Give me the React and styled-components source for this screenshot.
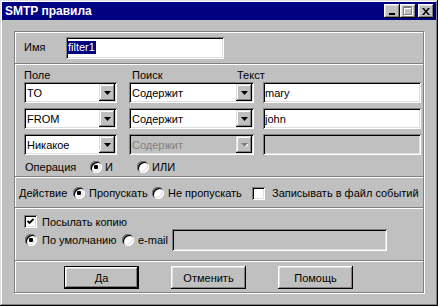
import React from 'react';
import styled, { createGlobalStyle } from 'styled-components';

const Global = createGlobalStyle`
  html, body { margin: 0; padding: 0; background: #c0c0c0; }
  body { font-family: "Liberation Sans", Arial, sans-serif; font-size: 11px; color: #000; }
  * { box-sizing: border-box; }
`;

const Window = styled.div`
  width: 438px;
  height: 306px;
  padding: 2px;
  background: #c0c0c0;
  box-shadow: inset -1px -1px #000, inset 1px 1px #dfdfdf, inset -2px -2px #808080, inset 2px 2px #fff;
  display: flex;
  flex-direction: column;
`;

const TitleBar = styled.div`
  height: 18px;
  background: #000080;
  color: #fff;
  font-weight: bold;
  font-size: 12px;
  padding-left: 3px;
  padding-right: 2px;
  display: flex;
  align-items: center;
`;

const Title = styled.span`
  flex: 1;
  white-space: nowrap;
`;

const CapBtn = styled.div`
  width: 16px;
  height: 14px;
  margin-left: ${p => p.$gap || 0}px;
  background: #c0c0c0;
  box-shadow: inset -1px -1px #000, inset 1px 1px #fff, inset -2px -2px #808080, inset 2px 2px #dfdfdf;
  display: flex;
  align-items: center;
  justify-content: center;
  svg { display: block; }
`;

const Body = styled.div`
  flex: 1;
  padding: 11px 12px 11px 12px;
  display: flex;
`;

const Group = styled.div`
  flex: 1;
  border: 1px solid #808080;
  box-shadow: inset 1px 1px #fff, 1px 1px #fff;
  display: flex;
  flex-direction: column;
`;

const Section = styled.div`
  height: ${p => p.$h}px;
  border-top: ${p => (p.$first ? 'none' : '1px solid #808080')};
  box-shadow: ${p => (p.$first ? 'none' : 'inset 0 1px #fff')};
  padding: ${p => p.$pad || '0'};
  display: flex;
  flex-direction: column;
`;

const Row = styled.div`
  display: flex;
  align-items: center;
  height: ${p => p.$h || 'auto'}${p => (p.$h ? 'px' : '')};
  margin-top: ${p => p.$mt || 0}px;
`;

const Label = styled.span`
  display: inline-block;
  width: ${p => (p.$w ? `${p.$w}px` : 'auto')};
  margin-left: ${p => p.$ml || 0}px;
  white-space: nowrap;
  line-height: 13px;
`;

const sunken = `
  box-shadow: inset 1px 1px #808080, inset -1px -1px #fff, inset 2px 2px #000, inset -2px -2px #dfdfdf;
`;

const Field = styled.div`
  width: ${p => p.$w}px;
  height: ${p => p.$h || 21}px;
  background: ${p => (p.$disabled ? '#c0c0c0' : '#fff')};
  ${sunken}
  padding: 0 2px;
  display: flex;
  align-items: center;
  white-space: nowrap;
  overflow: hidden;
`;

const Selected = styled.span`
  background: #000080;
  color: #fff;
  line-height: 13px;
  padding: 0 1px 0 0;
`;

const FieldRows = styled.div`
  display: grid;
  grid-template-columns: 105px 134px 158px;
  grid-auto-rows: 21px;
  row-gap: 5px;
`;

const Combo = styled.div`
  width: ${p => p.$w}px;
  height: 21px;
  background: ${p => (p.$disabled ? '#c0c0c0' : '#fff')};
  ${sunken}
  padding: 2px 2px 2px 3px;
  display: flex;
  align-items: center;
`;

const ComboText = styled.span`
  flex: 1;
  color: ${p => (p.$disabled ? '#808080' : '#000')};
  white-space: nowrap;
  overflow: hidden;
`;

const DropBtn = styled.div`
  width: 16px;
  height: 17px;
  background: #c0c0c0;
  box-shadow: inset -1px -1px #000, inset 1px 1px #dfdfdf, inset -2px -2px #808080, inset 2px 2px #fff;
  display: flex;
  align-items: center;
  justify-content: center;
  svg { display: block; }
`;

const Option = styled.label`
  display: flex;
  align-items: center;
  width: ${p => (p.$w ? `${p.$w}px` : 'auto')};
  margin-left: ${p => p.$ml || 0}px;
  gap: ${p => p.$gap || 4}px;
  white-space: nowrap;
`;

const RadioCircle = styled.span`
  position: relative;
  flex: none;
  width: 12px;
  height: 12px;
  border-radius: 50%;
  background: #fff;
  box-shadow: inset 1px 1px #808080, inset -1px -1px #fff, inset 2px 2px #000, inset -2px -2px #dfdfdf;
  &::after {
    content: '';
    display: ${p => (p.$checked ? 'block' : 'none')};
    position: absolute;
    left: 4px;
    top: 4px;
    width: 4px;
    height: 4px;
    border-radius: 1px;
    background: #000;
  }
`;

const CheckBox = styled.span`
  flex: none;
  width: 13px;
  height: 13px;
  background: #fff;
  ${sunken}
  display: flex;
  align-items: center;
  justify-content: center;
  svg { display: block; }
`;

const ButtonBar = styled.div`
  display: grid;
  grid-template-columns: repeat(3, 75px);
  column-gap: 32px;
`;

const Button = styled.div`
  height: 23px;
  background: #c0c0c0;
  display: flex;
  align-items: center;
  justify-content: center;
  border: ${p => (p.$default ? '1px solid #000' : 'none')};
  box-shadow: inset -1px -1px #000, inset 1px 1px #fff, inset -2px -2px #808080, inset 2px 2px #dfdfdf;
`;

const Arrow = ({ disabled }) => (
  <svg width="7" height="4" viewBox="0 0 7 4">
    {disabled && <polygon points="1,1 8,1 4.5,4.5" fill="#fff" />}
    <polygon points="0,0 7,0 3.5,4" fill={disabled ? '#808080' : '#000'} />
  </svg>
);

const Radio = ({ checked }) => <RadioCircle $checked={checked} />;

const Check = ({ checked }) => (
  <CheckBox>
    {checked && (
      <svg width="7" height="7" viewBox="0 0 7 7">
        <polyline points="0.5,3 2.5,5 6.5,1" fill="none" stroke="#000" strokeWidth="1.8" />
      </svg>
    )}
  </CheckBox>
);

const ComboBox = ({ w, value, disabled }) => (
  <Combo $w={w} $disabled={disabled}>
    <ComboText $disabled={disabled}>{value}</ComboText>
    <DropBtn>
      <Arrow disabled={disabled} />
    </DropBtn>
  </Combo>
);

export default function App() {
  const rows = [
    { f: 'TO', s: 'Содержит', t: 'mary' },
    { f: 'FROM', s: 'Содержит', t: 'john' },
    { f: 'Никакое', s: 'Содержит', t: '', disabled: true },
  ];
  return (
    <>
      <Global />
      <Window>
        <TitleBar>
          <Title>SMTP правила</Title>
          <CapBtn>
            <svg width="8" height="8" viewBox="0 0 8 8">
              <rect x="1" y="6" width="6" height="2" fill="#000" />
            </svg>
          </CapBtn>
          <CapBtn>
            <svg width="10" height="10" viewBox="0 0 10 10">
              <path d="M1.5 1.5h8v8h-8z M1.5 2.5h8" fill="none" stroke="#fff" strokeWidth="1" />
              <path d="M0.5 0.5h8v8h-8z M0.5 1.5h8" fill="none" stroke="#808080" strokeWidth="1" />
            </svg>
          </CapBtn>
          <CapBtn $gap={2}>
            <svg width="8" height="7" viewBox="0 0 8 7">
              <path d="M0 0h2l2 2.5L6 0h2L5 3.5 8 7H6L4 4.5 2 7H0l3-3.5z" fill="#000" />
            </svg>
          </CapBtn>
        </TitleBar>
        <Body>
          <Group>
            <Section $first $h={31} $pad="0 0 0 9px">
              <Row $h={31}>
                <Label $w={42}>Имя</Label>
                <Field $w={158} $h={22}>
                  <Selected>filter1</Selected>
                </Field>
              </Row>
            </Section>

            <Section $h={113} $pad="5px 0 0 9px">
              <Row $h={13}>
                <Label $w={108}>Поле</Label>
                <Label $w={105}>Поиск</Label>
                <Label>Текст</Label>
              </Row>
              <FieldRows>
                {rows.map((r, i) => (
                  <React.Fragment key={i}>
                    <ComboBox w={93} value={r.f} />
                    <ComboBox w={125} value={r.s} disabled={r.disabled} />
                    <Field $w={158} $disabled={r.disabled}>{r.t}</Field>
                  </React.Fragment>
                ))}
              </FieldRows>
              <Row $h={14} $mt={5}>
                <Label $w={65} $ml={1}>Операция</Label>
                <Option $w={47} $gap={3}>
                  <Radio checked />
                  <span>И</span>
                </Option>
                <Option $gap={3}>
                  <Radio />
                  <span>ИЛИ</span>
                </Option>
              </Row>
            </Section>

            <Section $h={31} $pad="2px 0 0 4px">
              <Row $h={28}>
                <Label $w={54}>Действие</Label>
                <Option $w={79}>
                  <Radio checked />
                  <span>Пропускать</span>
                </Option>
                <Option $w={100}>
                  <Radio />
                  <span>Не пропускать</span>
                </Option>
                <Option $gap={7}>
                  <Check />
                  <span>Записывать в файл событий</span>
                </Option>
              </Row>
            </Section>

            <Section $h={53} $pad="7px 0 0 9px">
              <Row $h={13}>
                <Option $gap={5}>
                  <Check checked />
                  <span>Посылать копию</span>
                </Option>
              </Row>
              <Row $h={22} $mt={1}>
                <Option $w={97} $ml={1} $gap={5}>
                  <Radio checked />
                  <span>По умолчанию</span>
                </Option>
                <Option $w={50}>
                  <Radio />
                  <span>e-mail</span>
                </Option>
                <Field $w={215} $h={22} $disabled />
              </Row>
            </Section>

            <Section $h={32} $pad="5px 0 0 49px">
              <ButtonBar>
                <Button $default>Да</Button>
                <Button>Отменить</Button>
                <Button>Помощь</Button>
              </ButtonBar>
            </Section>
          </Group>
        </Body>
      </Window>
    </>
  );
}
